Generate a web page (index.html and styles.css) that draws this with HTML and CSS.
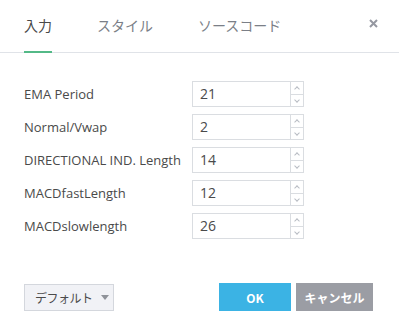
FILE: index.html
```html
<!DOCTYPE html>
<html lang="ja">
<head>
    <meta charset="UTF-8">
    <title>入力</title>
    <link rel="stylesheet" href="styles.css">
</head>
<body>
    <div class="dialog">
        <div class="dialog-header">
            <div class="tab active">入力</div>
            <div class="tab">スタイル</div>
            <div class="tab">ソースコード</div>
            <div class="close">
                <svg width="9" height="9" viewBox="0 0 9 9">
                    <path d="M1 1 L8 8 M8 1 L1 8" stroke="#9598a1" stroke-width="2" fill="none"/>
                </svg>
            </div>
        </div>

        <div class="dialog-body">
            <div class="row">
                <label class="label">EMA Period</label>
                <div class="spin-input">
                    <span class="value">21</span>
                    <div class="spinner"><span class="up"></span><span class="down"></span></div>
                </div>
            </div>
            <div class="row">
                <label class="label">Normal/Vwap</label>
                <div class="spin-input">
                    <span class="value">2</span>
                    <div class="spinner"><span class="up"></span><span class="down"></span></div>
                </div>
            </div>
            <div class="row">
                <label class="label">DIRECTIONAL IND. Length</label>
                <div class="spin-input">
                    <span class="value">14</span>
                    <div class="spinner"><span class="up"></span><span class="down"></span></div>
                </div>
            </div>
            <div class="row">
                <label class="label">MACDfastLength</label>
                <div class="spin-input">
                    <span class="value">12</span>
                    <div class="spinner"><span class="up"></span><span class="down"></span></div>
                </div>
            </div>
            <div class="row">
                <label class="label">MACDslowlength</label>
                <div class="spin-input">
                    <span class="value">26</span>
                    <div class="spinner"><span class="up"></span><span class="down"></span></div>
                </div>
            </div>
        </div>

        <div class="dialog-footer">
            <button class="btn-default">デフォルト<span class="caret"></span></button>
            <div class="footer-right">
                <button class="btn btn-ok">OK</button>
                <button class="btn btn-cancel">キャンセル</button>
            </div>
        </div>
    </div>
</body>
</html>
```

FILE: styles.css
```css
body {
    margin: 0;
    background: #ffffff;
    font-family: "Open Sans", "Noto Sans CJK JP", sans-serif;
    color: #4a4a4a;
}
.dialog {
    width: 399px;
    height: 336px;
    display: flex;
    flex-direction: column;
}
.dialog-header {
    height: 52px;
    border-bottom: 1px solid #e0e3e8;
    display: flex;
    align-items: flex-end;
    padding-left: 24px;
}
.tab {
    font-family: "Noto Sans CJK JP", sans-serif;
    font-size: 14px;
    line-height: 18px;
    color: #7b7f87;
    padding-bottom: 17px;
    margin-right: 45px;
    margin-bottom: -1px;
    border-bottom: 2px solid transparent;
}
.tab.active {
    color: #4a4a4a;
    border-bottom-color: #53b987;
}
.close {
    margin-left: auto;
    align-self: flex-start;
    margin-top: 19px;
    margin-right: 21px;
    height: 9px;
    line-height: 0;
}
.dialog-body {
    padding: 28px 24px 0 24px;
    display: flex;
    flex-direction: column;
    gap: 7px;
}
.row {
    display: flex;
    align-items: center;
    height: 26px;
}
.label {
    width: 168px;
    font-size: 13px;
    color: #4a4a4a;
}
.spin-input {
    width: 110px;
    height: 24px;
    border: 1px solid #dadde1;
    display: flex;
}
.value {
    flex: 1;
    padding-left: 7px;
    font-size: 14px;
    line-height: 24px;
}
.spinner {
    width: 12px;
    border-left: 1px solid #dadde1;
    display: flex;
    flex-direction: column;
}
.spinner span {
    flex: 1;
    position: relative;
}
.spinner .up {
    border-bottom: 1px solid #dadde1;
}
.spinner span::before {
    content: "";
    position: absolute;
    left: 4px;
    width: 3px;
    height: 3px;
    border-left: 1px solid #b8bcc3;
    border-top: 1px solid #b8bcc3;
}
.spinner .up::before {
    top: 5px;
    transform: rotate(45deg);
}
.spinner .down::before {
    top: 3px;
    transform: rotate(225deg);
}
.dialog-footer {
    margin-top: auto;
    padding: 0 26px 25px 24px;
    display: flex;
    align-items: center;
    justify-content: space-between;
}
.btn-default {
    width: 90px;
    height: 27px;
    background: #f1f2f6;
    border: 1px solid #d4d7dd;
    font-family: "Noto Sans CJK JP", sans-serif;
    font-size: 12px;
    letter-spacing: -0.5px;
    color: #4a4a4a;
    padding: 0 0 0 10px;
    display: flex;
    align-items: center;
    gap: 8px;
}
.caret {
    width: 0;
    height: 0;
    border-left: 4px solid transparent;
    border-right: 4px solid transparent;
    border-top: 5px solid #8f9299;
}
.footer-right {
    display: flex;
    gap: 5px;
}
.btn {
    height: 28px;
    border: none;
    color: #ffffff;
    font-family: "Noto Sans CJK JP", sans-serif;
    font-size: 12px;
    font-weight: bold;
}
.btn-ok {
    width: 72px;
    background: #3bb3e4;
}
.btn-cancel {
    width: 77px;
    background: #9b9da4;
}
```
